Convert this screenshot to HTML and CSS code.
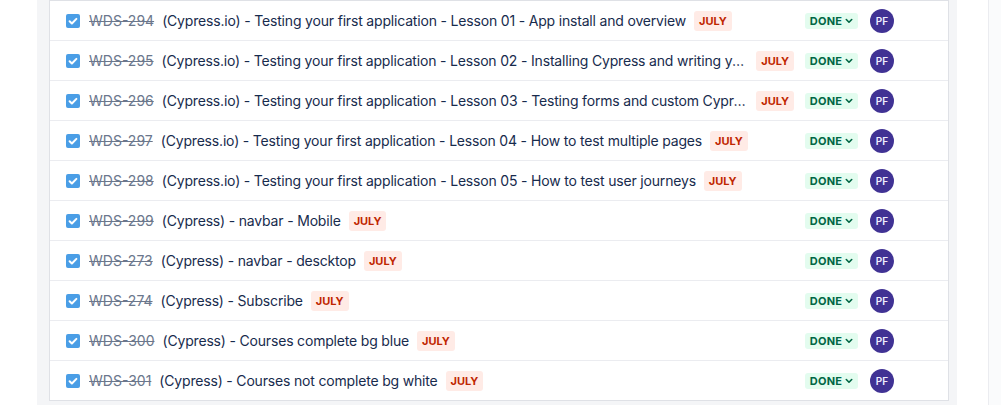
FILE: index.html
```html
<!DOCTYPE html>
<html>
<head>
<meta charset="utf-8">
<link rel="stylesheet" href="styles.css">
</head>
<body>
<div class="page">
  <div class="gutter"></div>
  <main class="main">
    <div class="card">
      <div class="row"><span class="check"><svg viewBox="0 0 14 14"><path d="M3.6 7.2l2.3 2.3 4.5-4.6" /></svg></span><span class="key">WDS-294</span><div class="sumwrap"><span class="summary">(Cypress.io) - Testing your first application - Lesson 01 - App install and overview</span><span class="loz red">JULY</span></div><span class="status">DONE<svg viewBox="0 0 8 6"><path d="M1.3 1.5L4 4.2l2.7-2.7"/></svg></span><span class="avatar">PF</span></div>
      <div class="row"><span class="check"><svg viewBox="0 0 14 14"><path d="M3.6 7.2l2.3 2.3 4.5-4.6" /></svg></span><span class="key">WDS-295</span><div class="sumwrap"><span class="summary">(Cypress.io) - Testing your first application - Lesson 02 - Installing Cypress and writing your first test</span><span class="loz red">JULY</span></div><span class="status">DONE<svg viewBox="0 0 8 6"><path d="M1.3 1.5L4 4.2l2.7-2.7"/></svg></span><span class="avatar">PF</span></div>
      <div class="row"><span class="check"><svg viewBox="0 0 14 14"><path d="M3.6 7.2l2.3 2.3 4.5-4.6" /></svg></span><span class="key">WDS-296</span><div class="sumwrap"><span class="summary">(Cypress.io) - Testing your first application - Lesson 03 - Testing forms and custom Cypress commands</span><span class="loz red">JULY</span></div><span class="status">DONE<svg viewBox="0 0 8 6"><path d="M1.3 1.5L4 4.2l2.7-2.7"/></svg></span><span class="avatar">PF</span></div>
      <div class="row"><span class="check"><svg viewBox="0 0 14 14"><path d="M3.6 7.2l2.3 2.3 4.5-4.6" /></svg></span><span class="key">WDS-297</span><div class="sumwrap"><span class="summary">(Cypress.io) - Testing your first application - Lesson 04 - How to test multiple pages</span><span class="loz red">JULY</span></div><span class="status">DONE<svg viewBox="0 0 8 6"><path d="M1.3 1.5L4 4.2l2.7-2.7"/></svg></span><span class="avatar">PF</span></div>
      <div class="row"><span class="check"><svg viewBox="0 0 14 14"><path d="M3.6 7.2l2.3 2.3 4.5-4.6" /></svg></span><span class="key">WDS-298</span><div class="sumwrap"><span class="summary">(Cypress.io) - Testing your first application - Lesson 05 - How to test user journeys</span><span class="loz red">JULY</span></div><span class="status">DONE<svg viewBox="0 0 8 6"><path d="M1.3 1.5L4 4.2l2.7-2.7"/></svg></span><span class="avatar">PF</span></div>
      <div class="row"><span class="check"><svg viewBox="0 0 14 14"><path d="M3.6 7.2l2.3 2.3 4.5-4.6" /></svg></span><span class="key">WDS-299</span><div class="sumwrap"><span class="summary">(Cypress) - navbar - Mobile</span><span class="loz red">JULY</span></div><span class="status">DONE<svg viewBox="0 0 8 6"><path d="M1.3 1.5L4 4.2l2.7-2.7"/></svg></span><span class="avatar">PF</span></div>
      <div class="row"><span class="check"><svg viewBox="0 0 14 14"><path d="M3.6 7.2l2.3 2.3 4.5-4.6" /></svg></span><span class="key">WDS-273</span><div class="sumwrap"><span class="summary">(Cypress) - navbar - descktop</span><span class="loz red">JULY</span></div><span class="status">DONE<svg viewBox="0 0 8 6"><path d="M1.3 1.5L4 4.2l2.7-2.7"/></svg></span><span class="avatar">PF</span></div>
      <div class="row"><span class="check"><svg viewBox="0 0 14 14"><path d="M3.6 7.2l2.3 2.3 4.5-4.6" /></svg></span><span class="key">WDS-274</span><div class="sumwrap"><span class="summary">(Cypress) - Subscribe</span><span class="loz red">JULY</span></div><span class="status">DONE<svg viewBox="0 0 8 6"><path d="M1.3 1.5L4 4.2l2.7-2.7"/></svg></span><span class="avatar">PF</span></div>
      <div class="row"><span class="check"><svg viewBox="0 0 14 14"><path d="M3.6 7.2l2.3 2.3 4.5-4.6" /></svg></span><span class="key">WDS-300</span><div class="sumwrap"><span class="summary">(Cypress) - Courses complete bg blue</span><span class="loz red">JULY</span></div><span class="status">DONE<svg viewBox="0 0 8 6"><path d="M1.3 1.5L4 4.2l2.7-2.7"/></svg></span><span class="avatar">PF</span></div>
      <div class="row"><span class="check"><svg viewBox="0 0 14 14"><path d="M3.6 7.2l2.3 2.3 4.5-4.6" /></svg></span><span class="key">WDS-301</span><div class="sumwrap"><span class="summary">(Cypress) - Courses not complete bg white</span><span class="loz red">JULY</span></div><span class="status">DONE<svg viewBox="0 0 8 6"><path d="M1.3 1.5L4 4.2l2.7-2.7"/></svg></span><span class="avatar">PF</span></div>
    </div>
  </main>
  <div class="spacer"></div>
  <aside class="side"></aside>
</div>
</body>
</html>
```
FILE: styles.css
```css
* { box-sizing: border-box; }
html, body { margin: 0; padding: 0; }
body {
  width: 1001px;
  height: 405px;
  overflow: hidden;
  font-family: Inter, "Noto Sans", sans-serif;
  color: #172b4d;
  background: #fff;
}
.page {
  display: flex;
  height: 405px;
}
.gutter { width: 37px; flex: 0 0 37px; }
.main {
  flex: 0 0 920px;
  width: 920px;
  min-width: 0;
  background: #f4f5f7;
  padding: 0 8px 0 12px;
}
.card {
  background: #fff;
  border: 1px solid #dfe1e6;
}
.row {
  display: flex;
  align-items: center;
  height: 40px;
  border-bottom: 1px solid #ebecf0;
  padding: 0 54px 0 16px;
}
.row:last-child { height: 39px; border-bottom: 0; }
.check {
  width: 14px;
  height: 14px;
  border-radius: 2px;
  background: #4a9ee6;
  flex: 0 0 14px;
  display: flex;
}
.check svg { width: 14px; height: 14px; fill: none; stroke: #fff; stroke-width: 2; stroke-linecap: round; stroke-linejoin: round; }
.key {
  margin-left: 9px;
  font-size: 14px;
  color: #6b778c;
  text-decoration: line-through;
  white-space: nowrap;
  flex: 0 0 auto;
}
.sumwrap {
  flex: 1 1 auto;
  min-width: 0;
  display: flex;
  align-items: center;
  margin-left: 8px;
  margin-right: 11px;
}
.summary {
  font-size: 14px;
  letter-spacing: -0.18px;
  white-space: nowrap;
  overflow: hidden;
  text-overflow: ellipsis;
  min-width: 0;
  padding-right: 2px;
}
.loz {
  flex: 0 0 auto;
  margin-left: 6px;
  font-size: 11px;
  font-weight: 700;
  line-height: 20px;
  height: 20px;
  padding: 0 5px;
  border-radius: 3px;
  text-transform: uppercase;
}
.red { background: #ffebe6; color: #bf2600; }
.status {
  flex: 0 0 53px;
  display: flex;
  align-items: center;
  justify-content: center;
  height: 16px;
  background: #e3fcef;
  color: #006644;
  font-size: 11px;
  font-weight: 700;
  border-radius: 3px;
  letter-spacing: 0.2px;
}
.status svg { width: 8px; height: 6px; margin-left: 3px; fill: none; stroke: #006644; stroke-width: 1.6; stroke-linecap: round; stroke-linejoin: round; }
.avatar {
  flex: 0 0 24px;
  width: 24px;
  height: 24px;
  margin-left: 12px;
  border-radius: 50%;
  background: #403294;
  color: #eef;
  font-size: 10px;
  font-weight: 600;
  display: flex;
  align-items: center;
  justify-content: center;
}
.spacer { flex: 0 0 32px; background: #fff; border-right: 1px solid #ebecf0; }
.side { flex: 1 1 auto; background: #fafbfc; }
```
